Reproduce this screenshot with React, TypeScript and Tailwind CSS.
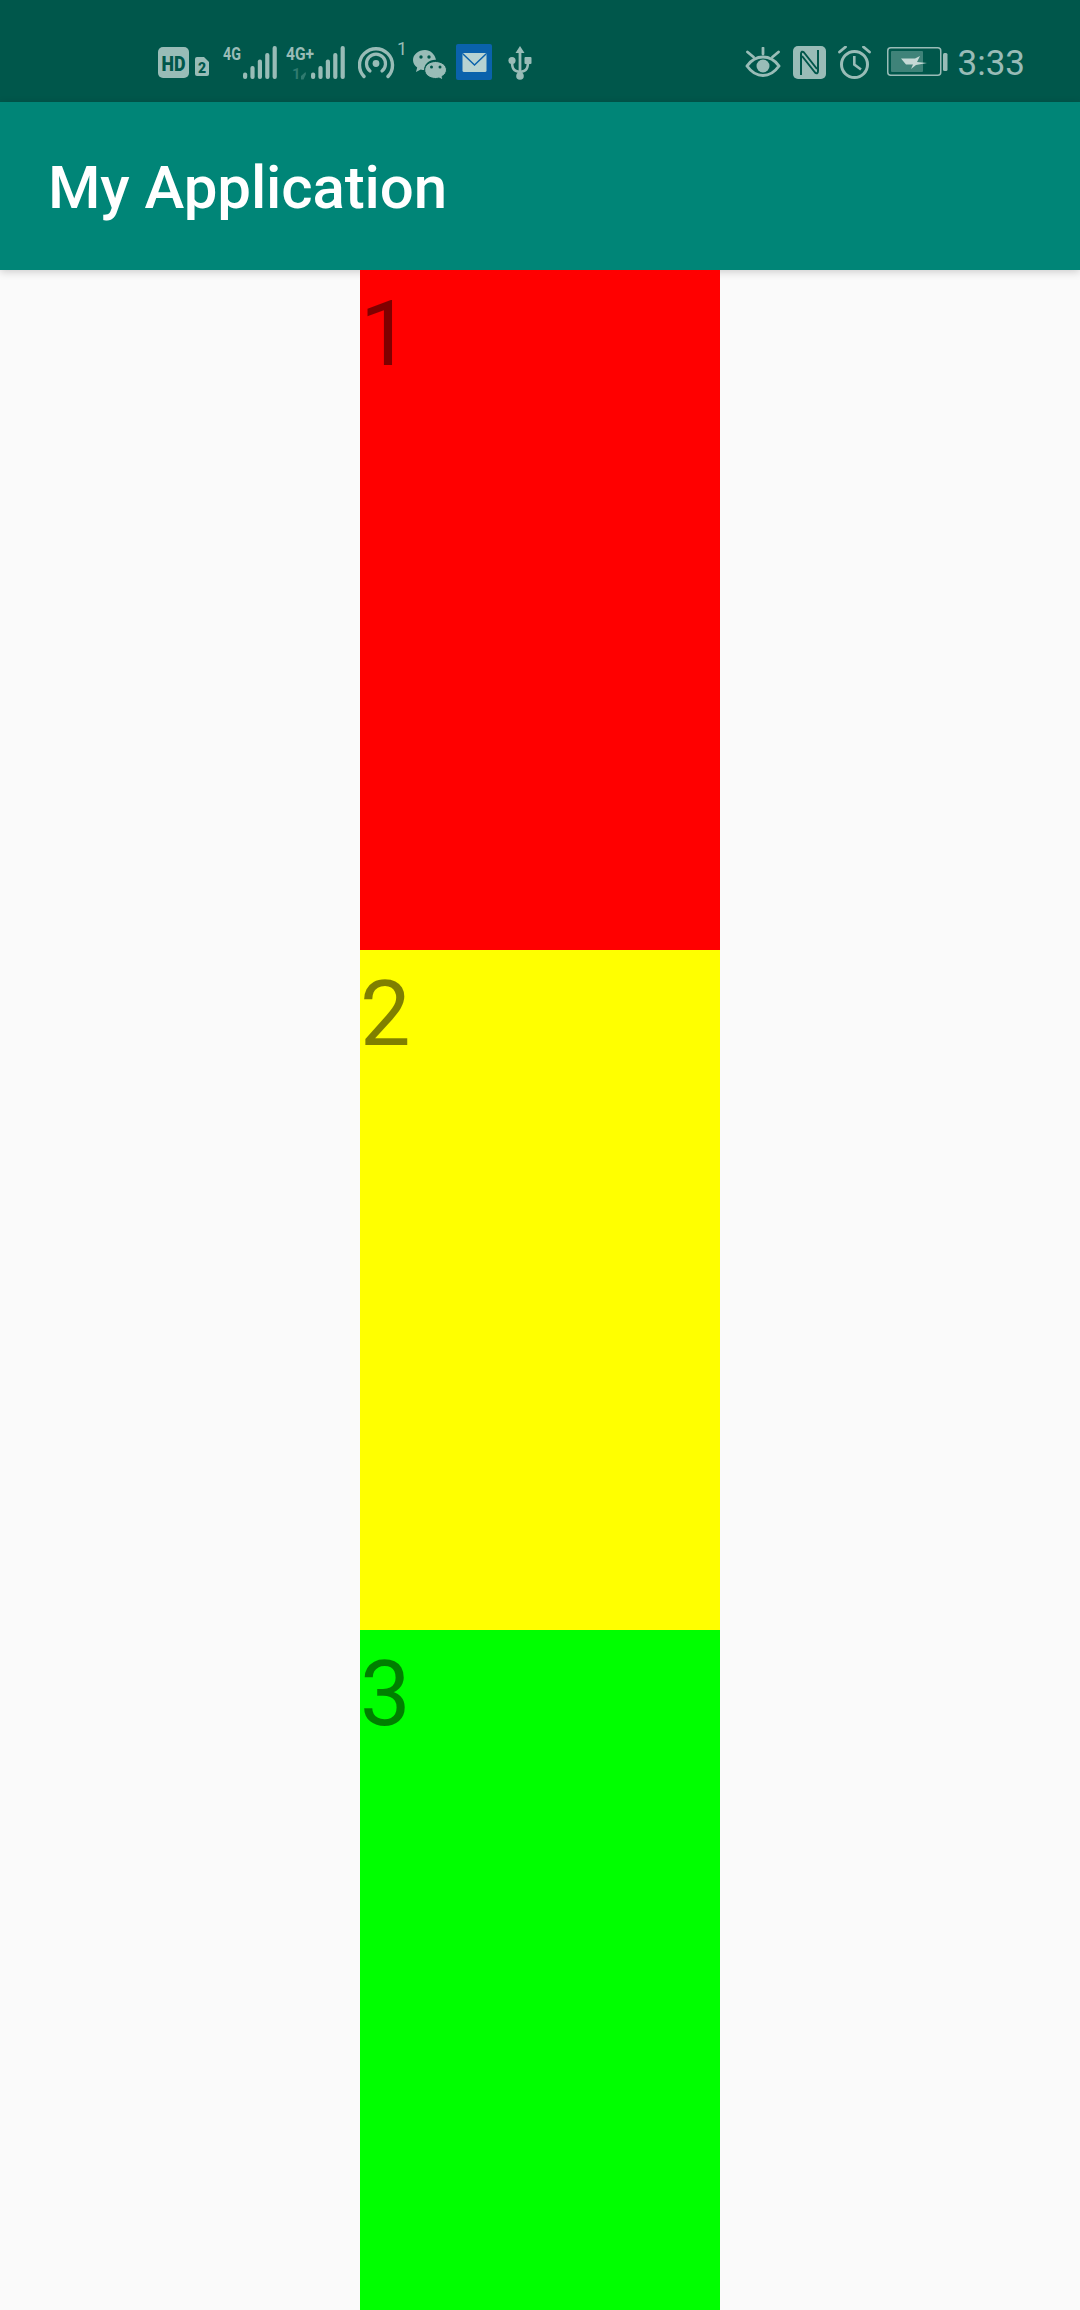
const ink = "#99BCB7";
const dark = "#00574B";

function Bars({ x = 0 }: { x?: number }) {
  const h = [6.5, 13, 19.5, 26, 33];
  return (
    <>
      {h.map((v, i) => (
        <rect key={i} x={x + i * 7.4} y={33 - v} width={4.2} height={v} rx={2} fill={ink} />
      ))}
    </>
  );
}

function Net() {
  return (
    <div className="ml-[13px] flex items-center">
      <svg width="56" height="44" viewBox="0 -5 56 44" className="mt-[1px]">
        <text x="0" y="14" fontFamily="Roboto" fontWeight="700" fontSize="18" fill={ink} textLength="18" lengthAdjust="spacingAndGlyphs">4G</text>
        <Bars x={20} />
      </svg>
      <svg width="60" height="44" viewBox="0 -5 60 44" className="ml-[7px] mt-[1px]">
        <text x="0" y="14" fontFamily="Roboto" fontWeight="700" fontSize="18" fill={ink} textLength="28" lengthAdjust="spacingAndGlyphs">4G+</text>
        <text x="6" y="33" fontFamily="Roboto" fontWeight="700" fontSize="15" fill="#2F7A6F">1</text>
        <path d="M15 22.500v7.500l4.500-4 .5 2-2.500 5.500H15z" fill="#2F7A6F" />
        <Bars x={25} />
      </svg>
    </div>
  );
}

export default function App() {
  return (
    <div className="h-[2310px] w-[1080px] overflow-hidden bg-[#FAFAFA] font-['Roboto',sans-serif]">
      <div className="flex h-[102px] items-center justify-between bg-[#00574B] pt-[22px] pl-[158px] pr-[55px]">
        <div className="flex items-center">
          <svg width="52" height="36" viewBox="0 -2 52 36" className="mt-[2px]">
            <rect x="0" y="0" width="31" height="31" rx="5" fill={ink} />
            <text x="3.500" y="23.500" fontFamily="Roboto" fontWeight="900" fontSize="20" fill={dark} textLength="24" lengthAdjust="spacingAndGlyphs">HD</text>
            <path d="M39 10h7l5 5v12a2 2 0 0 1-2 2H39a2 2 0 0 1-2-2V12a2 2 0 0 1 2-2z" fill={ink} />
            <text x="40" y="26" fontFamily="Roboto" fontWeight="900" fontSize="14" fill={dark}>2</text>
          </svg>
          <Net />
          <svg width="50" height="50" viewBox="0 -5 50 50" className="ml-[12px]">
            <path d="M6 34.500A16.500 16.500 0 1 1 30 34.500" fill="none" stroke={ink} strokeWidth="3.400" strokeLinecap="round" />
            <path d="M12 29A9.500 9.500 0 1 1 24 29" fill="none" stroke={ink} strokeWidth="3.200" strokeLinecap="round" />
            <circle cx="18" cy="21.500" r="3.400" fill={ink} />
            <text x="39" y="13" fontFamily="Roboto" fontSize="18" fill={ink}>1</text>
          </svg>
          <svg width="34" height="30" viewBox="0 0 34 30" className="ml-[5px] mt-[3px]">
            <path d="M12 1C5.400 1 0 5.500 0 11c0 3 1.600 5.600 4.200 7.500L3 23l4.800-2.600c1.100.3 2.300.5 3.500.6-.5-5.800 5-10.500 11.700-10.200C21.800 5 17.300 1 12 1z" fill={ink} />
            <path d="M22.500 12.500c-6 0-10.800 3.800-10.800 8.500s4.800 8.500 10.800 8.500c1.200 0 2.400-.2 3.500-.5l4 2-1-3.500c2.800-1.600 4.500-4 4.500-6.500 0-4.700-4.800-8.500-11-8.500z" fill={ink} stroke={dark} strokeWidth="1" />
            <circle cx="8" cy="8" r="1.700" fill={dark} />
            <circle cx="16" cy="8" r="1.700" fill={dark} />
            <circle cx="18.500" cy="18" r="1.500" fill={dark} />
            <circle cx="27" cy="18" r="1.500" fill={dark} />
          </svg>
          <svg width="36" height="36" viewBox="0 0 36 36" className="ml-[9px]">
            <rect width="36" height="36" rx="2" fill="#0A62AC" />
            <rect x="6.500" y="9" width="24" height="19" rx="1.500" fill="#B7D3D2" />
            <path d="M7 10 18.500 21 30 10" fill="none" stroke="#0A62AC" strokeWidth="1.500" />
          </svg>
          <svg width="24" height="34" viewBox="0 0 24 34" className="ml-[16px] mt-[1px]">
            <path d="M12 0l4.500 7h-3.100v23h-2.800V7H7.500z" fill={ink} />
            <circle cx="12" cy="30" r="3.800" fill={ink} />
            <path d="M12 26C5 25 4 22 4 15M12 26c7-1 8-4 8-11" fill="none" stroke={ink} strokeWidth="2.600" />
            <circle cx="4" cy="14.500" r="3.600" fill={ink} />
            <rect x="16.500" y="11" width="7" height="7" rx="1" fill={ink} />
          </svg>
        </div>
        <div className="flex items-center">
          <svg width="36" height="30" viewBox="0 0 36 30" className="mr-[12px]">
            <path d="M2 19C7 12 12 10 18 10s11 2 16 9c-5 7-10 9.500-16 9.500S7 26 2 19z" fill="none" stroke={ink} strokeWidth="3" strokeLinejoin="round" />
            <circle cx="18" cy="19" r="6.500" fill={ink} />
            <path d="M18 1v6M2.500 5l6 5M33.500 5l-6 5" fill="none" stroke={ink} strokeWidth="2.800" strokeLinecap="round" />
          </svg>
          <svg width="33" height="33" viewBox="0 0 33 33" className="mr-[12px]">
            <rect width="33" height="33" rx="5" fill={ink} />
            <path d="M8 29V8c0-2.500 1.500-3 3-1.500L24 23" fill="none" stroke={dark} strokeWidth="2" strokeLinejoin="round" />
            <path d="M25 4v21c0 2.500-1.500 3-3 1.500L9 10" fill="none" stroke={dark} strokeWidth="2" strokeLinejoin="round" />
          </svg>
          <svg width="33" height="33" viewBox="0 0 33 33" className="mr-[16px]">
            <circle cx="16.500" cy="18.500" r="13" fill="none" stroke={ink} strokeWidth="3" />
            <path d="M16.300 10v8.500l6.700 5" fill="none" stroke={ink} strokeWidth="2.600" />
            <path d="M1.500 6l6-5M31.500 6l-6-5" fill="none" stroke={ink} strokeWidth="2.800" strokeLinecap="round" />
          </svg>
          <svg width="61" height="30" viewBox="0 0 61 30" className="mr-[10px]">
            <rect x="0.750" y="0.750" width="53" height="27.500" rx="3" fill="none" stroke={ink} strokeWidth="1.500" />
            <rect x="4" y="4" width="32" height="21" rx="1" fill="#3F8379" />
            <path d="M14 11.500h14l5-2.500-3 6 10 1-11 2-5 4 2-4.500h-7z" fill="#C5D9D6" />
            <rect x="56" y="6" width="4.500" height="18" rx="1.500" fill={ink} />
          </svg>
          <span className="mt-[3px] text-[35px] leading-[40px] text-[#99BCB7]">3:33</span>
        </div>
      </div>
      <div className="flex h-[168px] items-center bg-[#008577] pl-[48px] pt-[3px] shadow-[0_2px_8px_rgba(0,0,0,0.18)]">
        <h1 className="text-[60px] leading-[70px] font-medium tracking-[-0.1px] text-white">My Application</h1>
      </div>
      <div className="mx-auto w-[360px]">
        <div className="h-[680px] bg-[#FF0000] text-[90px] leading-[130px] text-black/50">1</div>
        <div className="h-[680px] bg-[#FFFF00] text-[90px] leading-[130px] text-black/50">2</div>
        <div className="h-[680px] bg-[#00FF00] text-[90px] leading-[130px] text-black/50">3</div>
      </div>
    </div>
  );
}
